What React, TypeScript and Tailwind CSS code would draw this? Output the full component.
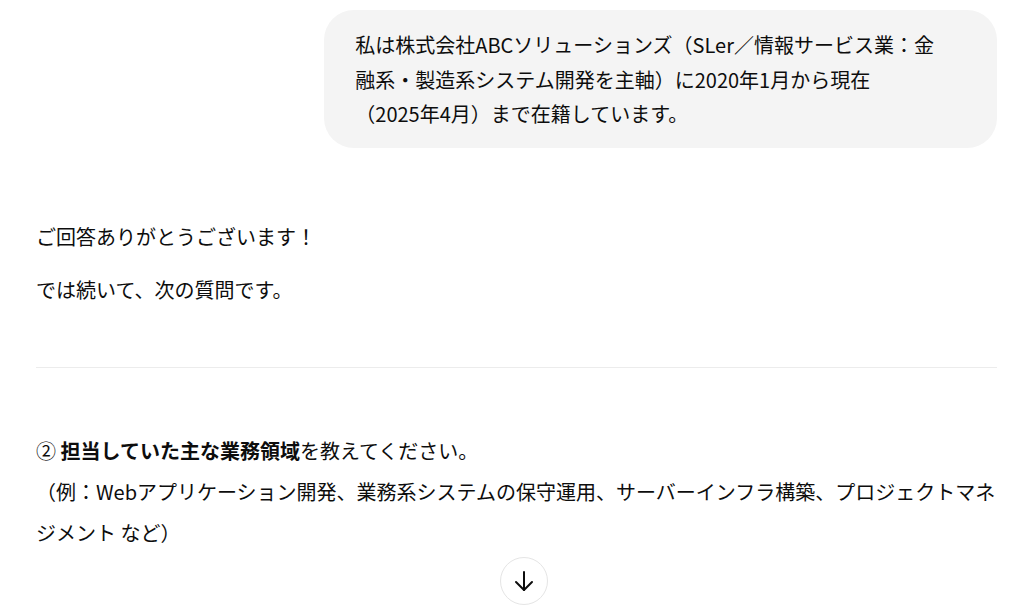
import React from "react";

export default function App() {
  return (
    <div
      className="relative h-[609px] w-full overflow-hidden bg-white text-[20px] text-[#0d0d0d]"
      style={{ fontFamily: '"Noto Sans CJK JP", "Noto Sans", sans-serif' }}
    >
      <div className="pl-[36px] pr-[25px]">
        <div className="flex justify-end pt-[10px]">
          <div className="w-[70%] rounded-[30px] bg-[#f4f4f4] px-[31px] pt-[18px] pb-[16px] leading-[34.5px]">
            私は株式会社ABCソリューションズ（SLer／情報サービス業：金
            <br />
            融系・製造系システム開発を主軸）に2020年1月から現在
            <br />
            （2025年4月）まで在籍しています。
          </div>
        </div>

        <div className="mt-[71px] leading-[35px]">
          <p>ご回答ありがとうございます！</p>
          <p className="mt-[18px]">では続いて、次の質問です。</p>
        </div>

        <hr className="mt-[60px] border-0 border-t border-[#ececec]" />

        <p className="mt-[62px] leading-[41px]">
          ② <strong className="font-bold">担当していた主な業務領域</strong>を教えてください。
          <br />
          （例：Webアプリケーション開発、業務系システムの保守運用、サーバーインフラ構築、プロジェクトマネジメント など）
        </p>
      </div>

      <button className="absolute left-[500px] top-[557px] flex h-[48px] w-[48px] items-center justify-center rounded-full border border-[#e5e5e5] bg-white">
        <svg width="24" height="24" viewBox="0 0 24 24" fill="none" stroke="#0d0d0d" strokeWidth="2" strokeLinecap="round" strokeLinejoin="round">
          <path d="M12 3v18" />
          <path d="M4 13l8 8 8-8" />
        </svg>
      </button>
    </div>
  );
}
